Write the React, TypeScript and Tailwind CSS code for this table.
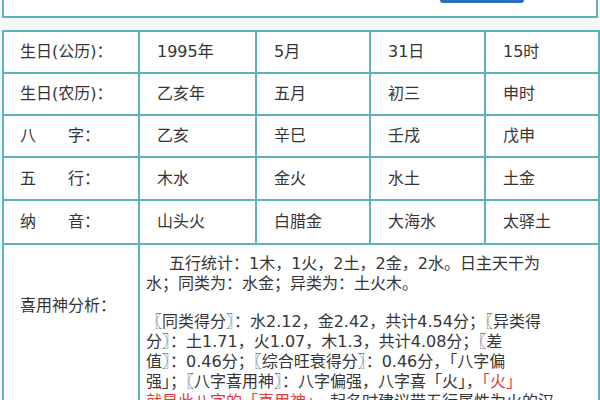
const rows = [
  { label: '生日(公历)：', cells: ['1995年', '5月', '31日', '15时'], h: 'h-[42px]' },
  { label: '生日(农历)：', cells: ['乙亥年', '五月', '初三', '申时'], h: 'h-[42px]' },
  { label: '八　　字：', cells: ['乙亥', '辛巳', '壬戌', '戊申'], h: 'h-[42px]' },
  { label: '五　　行：', cells: ['木水', '金火', '水土', '土金'], h: 'h-[43px]' },
  { label: '纳　　音：', cells: ['山头火', '白腊金', '大海水', '太驿土'], h: 'h-[44px]' },
];

function Line({ children, className = '' }: { children: React.ReactNode; className?: string }) {
  return <div className={`h-[20px] whitespace-nowrap ${className}`}>{children}</div>;
}

export default function App() {
  return (
    <div className="h-[400px] w-[600px] overflow-hidden bg-[#f6f8f8] px-[2px] font-['DejaVu_Sans','Noto_Sans_CJK_SC',sans-serif] text-[16px] leading-[20px] text-[#353535]">
      <div className="h-[18px] border-x-2 border-b-2 border-[#5eb2bb] bg-white">
        <div className="ml-[436px] h-[3px] w-[84px] rounded-b-sm bg-[#2d6cc0]" />
      </div>

      <table className="mt-[12px] w-[596px] table-fixed border-collapse border-2 border-[#5eb2bb] bg-white">
        <colgroup>
          <col className="w-[136px]" />
          <col className="w-[117px]" />
          <col className="w-[114px]" />
          <col className="w-[115px]" />
          <col className="w-[114px]" />
        </colgroup>
        <tbody>
          {rows.map((row) => (
            <tr key={row.label} className={row.h}>
              <td className="border-2 border-[#5eb2bb] pl-[16px] align-middle">{row.label}</td>
              {row.cells.map((c) => (
                <td key={c} className="border-2 border-[#5eb2bb] pl-[17px] align-middle">
                  {c}
                </td>
              ))}
            </tr>
          ))}
          <tr>
            <td className="h-[180px] border-2 border-[#5eb2bb] pl-[16px] pt-[51px] align-top">喜用神分析：</td>
            <td colSpan={4} className="border-2 border-[#5eb2bb] pl-[6px] pt-[9px] align-top">
              <div className="overflow-hidden">
                <Line className="pl-[23px]">五行统计：1木，1火，2土，2金，2水。日主天干为</Line>
                <Line>水；同类为：水金；异类为：土火木。</Line>
                <div className="h-[18px]" />
                <Line>〖同类得分〗：水2.12，金2.42，共计4.54分；〖异类得</Line>
                <Line>分〗：土1.71，火1.07，木1.3，共计4.08分；〖差</Line>
                <Line>值〗：0.46分；〖综合旺衰得分〗：0.46分，「八字偏</Line>
                <Line>
                  强」；〖八字喜用神〗：八字偏强，八字喜「火」，<span className="text-[#e03c3c]">「火」</span>
                </Line>
                <Line>
                  <span className="text-[#e03c3c]">就是此八字的「喜用神」</span>，起名时建议带五行属性为火的汉
                </Line>
              </div>
            </td>
          </tr>
        </tbody>
      </table>
    </div>
  );
}
